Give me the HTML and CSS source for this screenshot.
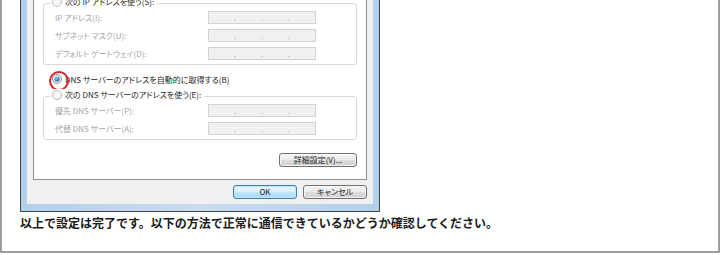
FILE: index.html
```html
<!DOCTYPE html>
<html lang="ja">
<head>
    <meta charset="UTF-8">
    <meta name="viewport" content="width=device-width, initial-scale=1.0">
    <title>DNS 設定</title>
    <link rel="stylesheet" href="styles.css">
</head>
<body>

<div class="page">
    <div class="dialog">
        <div class="dialog-face">
            <div class="tab-page">

                <!-- IP アドレス -->
                <div class="group">
                    <div class="group-title">
                        <svg class="radio" width="10" height="10" viewBox="0 0 10 10"><circle cx="5" cy="5" r="4.5" fill="#f6f6f6" stroke="#bdbdbd"/></svg>
                        次の IP アドレスを使う(S):
                    </div>
                    <span class="field-label">IP アドレス(I):</span>
                    <div class="ip-box"><span>.</span><span>.</span><span>.</span></div>
                    <span class="field-label">サブネット マスク(U):</span>
                    <div class="ip-box"><span>.</span><span>.</span><span>.</span></div>
                    <span class="field-label">デフォルト ゲートウェイ(D):</span>
                    <div class="ip-box"><span>.</span><span>.</span><span>.</span></div>
                </div>

                <div class="option-row">
                    <span class="radio-mark">
                        <svg class="radio" width="10" height="10" viewBox="0 0 10 10">
                            <defs>
                                <radialGradient id="dot" cx="0.4" cy="0.35" r="0.7">
                                    <stop offset="0" stop-color="#8fd0f5"/>
                                    <stop offset="1" stop-color="#1b5a99"/>
                                </radialGradient>
                            </defs>
                            <circle cx="5" cy="5" r="4.5" fill="#f2f2f2" stroke="#8d8d8d"/>
                            <circle cx="5" cy="5" r="2.6" fill="url(#dot)"/>
                        </svg>
                    </span>
                    DNS サーバーのアドレスを自動的に取得する(B)
                </div>

                <!-- DNS サーバー -->
                <div class="group">
                    <div class="group-title">
                        <svg class="radio" width="10" height="10" viewBox="0 0 10 10"><circle cx="5" cy="5" r="4.5" fill="#f6f6f6" stroke="#bdbdbd"/></svg>
                        次の DNS サーバーのアドレスを使う(E):
                    </div>
                    <span class="field-label">優先 DNS サーバー(P):</span>
                    <div class="ip-box"><span>.</span><span>.</span><span>.</span></div>
                    <span class="field-label">代替 DNS サーバー(A):</span>
                    <div class="ip-box"><span>.</span><span>.</span><span>.</span></div>
                </div>

                <div class="tab-actions">
                    <button class="win-button wide">詳細設定(V)...</button>
                </div>
            </div>

            <div class="dialog-buttons">
                <button class="win-button default">OK</button>
                <button class="win-button">キャンセル</button>
            </div>
        </div>
    </div>

    <p class="note">以上で設定は完了です。以下の方法で正常に通信できているかどうか確認してください。</p>
</div>

</body>
</html>
```

FILE: styles.css
```css
* {
    margin: 0;
    padding: 0;
    box-sizing: border-box;
}

body {
    font-family: "Noto Sans CJK JP", "Noto Sans", sans-serif;
    background-color: #fff;
    color: #1e1e1e;
    overflow: hidden;
}

.page {
    width: 720px;
    height: 253px;
    border: 2px solid #9d9d9d;
    border-top: none;
    padding-left: 18px;
}

/* ウィンドウ枠 */
.dialog {
    width: 360px;
    height: 212px;
    border: 1px solid #3e4650;
    border-top: none;
    background: linear-gradient(90deg, #b4cfea, #c9dcf0 50%, #b4cfea);
    padding: 0 6px 7px;
}

.dialog-face {
    height: 100%;
    background-color: #f0f0f0;
    padding: 0 6px;
}

.tab-page {
    height: 180px;
    background-color: #fff;
    border: 1px solid #8e8f8f;
    border-top: none;
    padding: 3px 9px 0;
    font-size: 8px;
    font-feature-settings: "palt";
}

.group {
    position: relative;
    display: grid;
    grid-template-columns: 153px 108px;
    row-gap: 5px;
    border: 1px solid #d9d9d9;
    border-radius: 3px;
    padding: 7px 0 4px 11px;
}

.group-title {
    position: absolute;
    top: -8px;
    left: 7px;
    display: flex;
    align-items: center;
    gap: 3px;
    padding: 0 3px 0 1px;
    background-color: #fff;
    line-height: 12px;
    color: #1e1e1e;
}

.radio {
    display: block;
    flex-shrink: 0;
}

.field-label {
    line-height: 13px;
    color: #a3a3a3;
}

.ip-box {
    height: 13px;
    display: flex;
    justify-content: space-evenly;
    align-items: center;
    background-color: #f0f0f0;
    border: 1px solid #d2d2d2;
    color: #a0a0a0;
    line-height: 8px;
}

.option-row {
    display: flex;
    align-items: center;
    gap: 3px;
    height: 12px;
    margin: 8px 0 11px 9px;
}

/* 赤丸の注記 */
.radio-mark {
    position: relative;
    display: block;
}

.radio-mark::after {
    content: "";
    position: absolute;
    left: -3px;
    top: -3px;
    width: 16px;
    height: 16px;
    border: 2px solid #d8232a;
    border-radius: 50%;
}

.tab-actions {
    display: flex;
    justify-content: flex-end;
    margin-top: 13px;
}

.win-button {
    width: 64px;
    height: 14px;
    font-family: inherit;
    font-size: 8px;
    line-height: 12px;
    color: #1e1e1e;
    border: 1px solid #707070;
    border-radius: 3px;
    background: linear-gradient(#f3f3f3 0%, #ebebeb 48%, #dddddd 52%, #cfcfcf 100%);
    box-shadow: inset 0 0 0 1px rgba(255, 255, 255, 0.7);
    font-feature-settings: "palt";
}

.win-button.wide {
    width: 78px;
}

.win-button.default {
    border-color: #3c7fb1;
    background: linear-gradient(#eaf6fd 0%, #d9f0fc 48%, #bee6fd 52%, #a7d9f5 100%);
    box-shadow: inset 0 0 0 1px #c4e5f6;
}

.dialog-buttons {
    display: flex;
    justify-content: flex-end;
    gap: 6px;
    padding-top: 5px;
}

.note {
    margin-top: 4px;
    font-size: 12px;
    font-weight: bold;
    line-height: 14px;
    color: #1a1a1a;
}
```
